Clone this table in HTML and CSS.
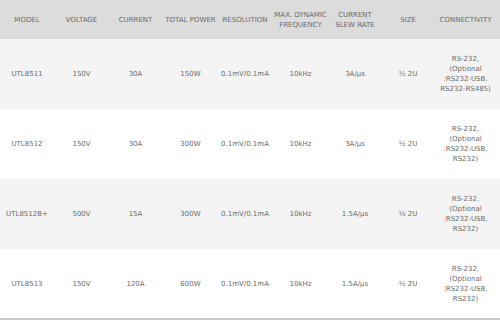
FILE: index.html
```html
<!DOCTYPE html>
<html>
<head>
<meta charset="utf-8">
<link rel="stylesheet" href="styles.css">
</head>
<body>
<div class="wrap">
<table class="spec">
  <colgroup>
    <col class="c1"><col class="c2"><col class="c3"><col class="c4"><col class="c5"><col class="c6"><col class="c7"><col class="c8"><col class="c9">
  </colgroup>
  <thead>
    <tr>
      <th>MODEL</th>
      <th>VOLTAGE</th>
      <th>CURRENT</th>
      <th>TOTAL POWER</th>
      <th>RESOLUTION</th>
      <th>MAX. DYNAMIC<br>FREQUENCY</th>
      <th>CURRENT<br>SLEW RATE</th>
      <th>SIZE</th>
      <th>CONNECTIVITY</th>
    </tr>
  </thead>
  <tbody>
    <tr class="alt">
      <td>UTL8511</td><td>150V</td><td>30A</td><td>150W</td><td>0.1mV/0.1mA</td><td>10kHz</td><td>3A/μs</td><td>½ 2U</td>
      <td>RS-232,<br>(Optional<br>:RS232-USB,<br>RS232-RS485)</td>
    </tr>
    <tr>
      <td>UTL8512</td><td>150V</td><td>30A</td><td>300W</td><td>0.1mV/0.1mA</td><td>10kHz</td><td>3A/μs</td><td>½ 2U</td>
      <td>RS-232,<br>(Optional<br>:RS232-USB,<br>RS232)</td>
    </tr>
    <tr class="alt">
      <td>UTL8512B+</td><td>500V</td><td>15A</td><td>300W</td><td>0.1mV/0.1mA</td><td>10kHz</td><td>1.5A/μs</td><td>½ 2U</td>
      <td>RS-232,<br>(Optional<br>:RS232-USB,<br>RS232)</td>
    </tr>
    <tr>
      <td>UTL8513</td><td>150V</td><td>120A</td><td>600W</td><td>0.1mV/0.1mA</td><td>10kHz</td><td>1.5A/μs</td><td>½ 2U</td>
      <td>RS-232,<br>(Optional<br>:RS232-USB,<br>RS232)</td>
    </tr>
  </tbody>
</table>
</div>
</body>
</html>
```
FILE: styles.css
```css
html, body {
  margin: 0;
  padding: 0;
  background: #ffffff;
}
.wrap {
  width: 500px;
  height: 318px;
  border-bottom: 2px solid #c8c8c8;
  overflow: hidden;
}
.spec {
  width: 500px;
  border-collapse: collapse;
  table-layout: fixed;
  font-family: "DejaVu Sans", "Liberation Sans", sans-serif;
  font-size: 7px;
  line-height: 10px;
  color: #6a6a6a;
}
.c1 { width: 54px; }
.c2 { width: 55px; }
.c3 { width: 53px; }
.c4 { width: 57px; }
.c5 { width: 52px; }
.c6 { width: 59px; }
.c7 { width: 50px; }
.c8 { width: 56px; }
.c9 { width: 64px; }
.spec th, .spec td {
  padding: 0 5px 0 0;
  text-align: center;
  vertical-align: middle;
  font-weight: normal;
  white-space: nowrap;
}
.spec th:not(:last-child), .spec td:not(:last-child) {
  padding: 0;
}
.spec thead tr {
  height: 39px;
  background: #dcdcdc;
}
.spec tbody tr {
  height: 70px;
  background: #ffffff;
}
.spec tbody tr.alt {
  background: #f4f4f4;
}
```
